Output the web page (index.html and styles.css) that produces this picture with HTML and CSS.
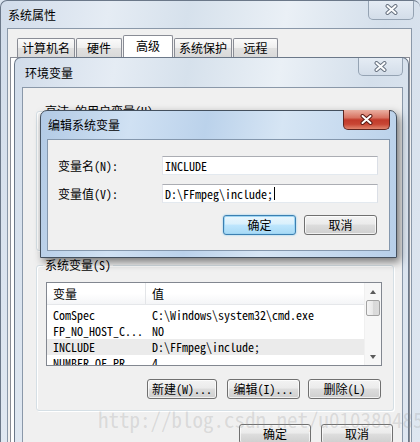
FILE: index.html
```html
<!DOCTYPE html>
<html lang="zh-CN">
<head>
<meta charset="utf-8">
<title>环境变量</title>
<link rel="stylesheet" href="styles.css">
</head>
<body>
<div class="win inactive outer">
  <div class="titlebar outer-title">
    <span class="title-text">系统属性</span>
    <span class="close outer-close"><svg width="13" height="11" viewBox="0 0 13 11"><path d="M2.5 2 L10.5 9 M10.5 2 L2.5 9" stroke="#6a7482" stroke-width="4" stroke-linecap="round"/><path d="M2.5 2 L10.5 9 M10.5 2 L2.5 9" stroke="#fbfcfd" stroke-width="2" stroke-linecap="round"/></svg></span>
  </div>
  <div class="client outer-client">
    <div class="tabs">
      <div class="tab t1">计算机名</div>
      <div class="tab t2">硬件</div>
      <div class="tab sel t3">高级</div>
      <div class="tab t4">系统保护</div>
      <div class="tab t5">远程</div>
    </div>
    <div class="tabpanel"></div>
  </div>
</div>

<div class="win inactive env">
  <div class="titlebar env-title">
    <span class="title-text">环境变量</span>
    <span class="close env-close"><svg width="13" height="11" viewBox="0 0 13 11"><path d="M2.5 2 L10.5 9 M10.5 2 L2.5 9" stroke="#6a7482" stroke-width="4" stroke-linecap="round"/><path d="M2.5 2 L10.5 9 M10.5 2 L2.5 9" stroke="#fbfcfd" stroke-width="2" stroke-linecap="round"/></svg></span>
  </div>
  <div class="client env-client">
    <fieldset class="group user-group">
      <legend>高洁 的用户变量(U)</legend>
    </fieldset>
    <fieldset class="group sys-group">
      <legend>系统变量(S)</legend>
      <div class="list">
        <div class="list-main">
          <div class="lhead"><span class="c1">变量</span><span class="c2">值</span></div>
          <div class="row"><span class="c1">ComSpec</span><span class="c2">C:\Windows\system32\cmd.exe</span></div>
          <div class="row"><span class="c1">FP_NO_HOST_C...</span><span class="c2">NO</span></div>
          <div class="row hl"><span class="c1">INCLUDE</span><span class="c2">D:\FFmpeg\include;</span></div>
          <div class="row"><span class="c1">NUMBER_OF_PR...</span><span class="c2">4</span></div>
        </div>
        <div class="vscroll">
          <div class="arr"><span class="tri up"></span></div>
          <div class="thumb"></div>
          <div class="track"></div>
          <div class="arr"><span class="tri down"></span></div>
        </div>
      </div>
      <div class="btnrow sys-btns">
        <span class="btn b-new">新建(W)...</span>
        <span class="btn b-edit">编辑(I)...</span>
        <span class="btn b-del">删除(L)</span>
      </div>
    </fieldset>
    <div class="btnrow env-btns">
      <span class="btn b-ok2">确定</span>
      <span class="btn b-cancel2">取消</span>
    </div>
  </div>
</div>

<div class="win active edit">
  <div class="titlebar edit-title">
    <span class="title-text">编辑系统变量</span>
    <span class="close red edit-close"><svg width="13" height="11" viewBox="0 0 13 11"><path d="M2.5 2 L10.5 9 M10.5 2 L2.5 9" stroke="#5a1a14" stroke-width="4" stroke-linecap="round"/><path d="M2.5 2 L10.5 9 M10.5 2 L2.5 9" stroke="#ffffff" stroke-width="2" stroke-linecap="round"/></svg></span>
  </div>
  <div class="client edit-client">
    <div class="frow">
      <span class="flabel">变量名(N):</span>
      <span class="input">INCLUDE</span>
    </div>
    <div class="frow">
      <span class="flabel">变量值(V):</span>
      <span class="input">D:\FFmpeg\include;<span class="caret"></span></span>
    </div>
    <div class="btnrow edit-btns">
      <span class="btn default">确定</span>
      <span class="btn">取消</span>
    </div>
  </div>
</div>

<div class="watermark">http://blog.csdn.net/u010380485</div>
</body>
</html>
```

FILE: styles.css
```css
* { box-sizing: border-box; }
html, body { margin: 0; padding: 0; }
body {
  width: 420px;
  height: 442px;
  overflow: hidden;
  position: relative;
  background: #dbe5f0;
  color: #000;
  font-family: "Noto Sans Mono CJK SC", "Noto Sans CJK SC", sans-serif;
  font-size: 12px;
  line-height: 14px;
}

/* ---------- windows ---------- */
.win {
  position: absolute;
  display: flex;
  flex-direction: column;
  border: 1px solid #6b7889;
  border-radius: 7px 7px 0 0;
  overflow: hidden;
}
.inactive {
  background: linear-gradient(100deg, #d1dcea 0%, #e5ecf4 22%, #d6e1ec 38%, #eaf0f6 58%, #d4dfeb 78%, #dfe7f1 100%);
}
.active {
  background: linear-gradient(100deg, #b2cae5 0%, #d0e1f3 24%, #bbd2eb 44%, #d6e5f4 64%, #b7cfe9 100%);
  border-color: #44505e;
  box-shadow: 3px 4px 9px rgba(0, 0, 0, 0.5);
  overflow: visible;
}
.titlebar {
  position: relative;
  flex: none;
  display: flex;
  align-items: center;
}
.close {
  position: absolute;
  top: -1px;
  height: 20px;
  display: flex;
  align-items: center;
  justify-content: center;
  border: 1px solid #95a3b3;
  border-top: none;
  border-radius: 0 0 5px 5px;
  background: linear-gradient(#e6edf5, #d3dde9);
}
.close.red {
  border-color: #5e2520;
  background: linear-gradient(#eab0a2 0%, #d87463 40%, #c23b2b 52%, #c84634 75%, #e1866f 100%);
}
.client {
  flex: 1;
  background: #f0f0f0;
  border: 1px solid #8a98a9;
}

/* ---------- outer window ---------- */
.outer { left: 0; top: 0; width: 420px; height: 442px; border-right: none; border-bottom: none; }
.outer-title { height: 27px; padding-left: 7px; }
.outer-close { right: 6px; width: 46px; }
.outer-client {
  margin: 0 8px 0 6px;
  border-bottom: none;
  display: flex;
  flex-direction: column;
}
.tabs {
  display: flex;
  align-items: flex-end;
  gap: 1px;
  height: 28px;
  flex: none;
  padding-left: 9px;
}
.tab {
  height: 19px;
  border: 1px solid #898c95;
  border-bottom: none;
  border-radius: 2px 2px 0 0;
  text-align: center;
  line-height: 18px;
  background: linear-gradient(#fbfbfb, #eeeeee 50%, #e1e1e1 51%, #d9d9d9);
}
.tab.sel { height: 22px; background: #fff; line-height: 19px; }
.t1 { width: 58px; }
.t2 { width: 46px; }
.t3 { width: 50px; }
.t4 { width: 58px; }
.t5 { width: 45px; }
.tabpanel {
  flex: 1;
  margin: 0 1px 0 2px;
  border: 1px solid #898c95;
  border-bottom: none;
  background: #fff;
}

/* ---------- environment window ---------- */
.env { left: 14px; top: 57px; width: 395px; height: 385px; border-bottom: none; }
.env-title { height: 29px; padding-left: 10px; }
.env-close { right: 5px; width: 45px; height: 19px; }
.env-client {
  margin: 0 5px 0 7px;
  border-bottom: none;
  padding: 0 8px 0 13px;
  display: flex;
  flex-direction: column;
  overflow: hidden;
}
.group {
  margin: 0;
  min-width: 0;
  flex: none;
  border: 1px solid #d5dfe5;
  border-radius: 3px;
  box-shadow: inset 1px 1px 0 #fff, 1px 1px 0 #fff;
  padding: 10px 11px 11px 9px;
}
.group legend {
  margin-left: -3px;
  padding: 0 2px;
  line-height: 14px;
}
.user-group { margin-top: 16px; height: 147px; }
.sys-group { margin-top: 7px; }

.list {
  display: flex;
  height: 84px;
  border: 1px solid #828790;
  background: #fff;
  overflow: hidden;
}
.list-main { flex: 1; overflow: hidden; }
.lhead {
  height: 22px;
  display: flex;
  align-items: stretch;
  border-bottom: 1px solid #e5e7ea;
  background: linear-gradient(#ffffff 0%, #ffffff 50%, #f4f5f7 100%);
  margin-bottom: 2px;
}
.lhead span { display: flex; align-items: center; }
.lhead .c1 { border-right: 1px solid #e3e5e8; }
.c1 { width: 99px; flex: none; padding-left: 6px; white-space: nowrap; overflow: hidden; }
.c2 { padding-left: 6px; white-space: nowrap; }
.row { display: flex; height: 16px; line-height: 16px; }
.row.hl { background: #ebebeb; }
.vscroll {
  width: 17px;
  flex: none;
  display: flex;
  flex-direction: column;
  background: #f7f7f7;
  border-left: 1px solid #f0f0f0;
}
.arr {
  height: 17px;
  flex: none;
  display: flex;
  align-items: center;
  justify-content: center;
}
.tri { width: 0; height: 0; border-left: 3.5px solid transparent; border-right: 3.5px solid transparent; }
.tri.up { border-bottom: 4px solid #5a5a5a; }
.tri.down { border-top: 4px solid #5a5a5a; }
.thumb {
  height: 16px;
  flex: none;
  margin: 0 1px;
  border: 1px solid #a2a2a2;
  border-radius: 2px;
  background: linear-gradient(90deg, #f5f5f5, #e8e8e8 50%, #d9d9d9 51%, #dcdcdc);
}
.track { flex: 1; }

.btnrow { display: flex; flex: none; }
.sys-btns { margin-top: 13px; justify-content: flex-end; margin-right: 1px; }
.env-btns { margin-top: 13px; justify-content: flex-end; gap: 10px; margin-right: 1px; }

.btn {
  height: 20px;
  border: 1px solid #707070;
  border-radius: 3px;
  display: flex;
  align-items: center;
  justify-content: center;
  background: linear-gradient(#f3f3f3 0%, #ebebeb 45%, #dddddd 50%, #cfcfcf 100%);
  box-shadow: inset 0 0 0 1px rgba(255, 255, 255, 0.7);
  width: 73px;
  flex: none;
}
.b-new { width: 70px; margin-right: 10px; }
.b-edit { margin-right: 8px; }
.b-ok2, .b-cancel2 { width: 72px; }

/* ---------- edit dialog ---------- */
.edit { left: 40px; top: 110px; width: 357px; height: 148px; }
.edit-title { height: 28px; padding-left: 7px; }
.edit-close { right: 6px; width: 47px; }
.edit-client {
  margin: 0 6px 6px 6px;
  border-color: #8497ad;
  padding: 16px 11px 0 10px;
  display: flex;
  flex-direction: column;
}
.frow { display: flex; align-items: center; height: 19px; margin-bottom: 9px; }
.flabel { width: 104px; flex: none; }
.input {
  flex: 1;
  height: 19px;
  display: flex;
  align-items: center;
  padding-left: 2px;
  background: #fff;
  border: 1px solid;
  border-color: #abadb3 #dbdfe6 #e3e9ef #e2e3ea;
}
.caret { width: 1px; height: 13px; background: #000; margin-left: 1px; }
.edit-btns { margin-top: 3px; justify-content: flex-end; gap: 8px; margin-right: 1px; }
.btn.default {
  border-color: #3c7fb1;
  background: linear-gradient(#eaf6fd 0%, #d9f0fc 45%, #bee6fd 50%, #a7d9f5 100%);
  box-shadow: inset 0 0 0 1px #9ed5f3, 0 0 2px #7ac4ec;
}

/* ---------- watermark ---------- */
.watermark {
  position: absolute;
  left: 98px;
  top: 407px;
  font-family: "Noto Sans Mono CJK SC", "Liberation Mono", monospace;
  font-size: 21px;
  line-height: 24px;
  white-space: nowrap;
  color: rgba(140, 140, 140, 0.24);
  pointer-events: none;
}
```
